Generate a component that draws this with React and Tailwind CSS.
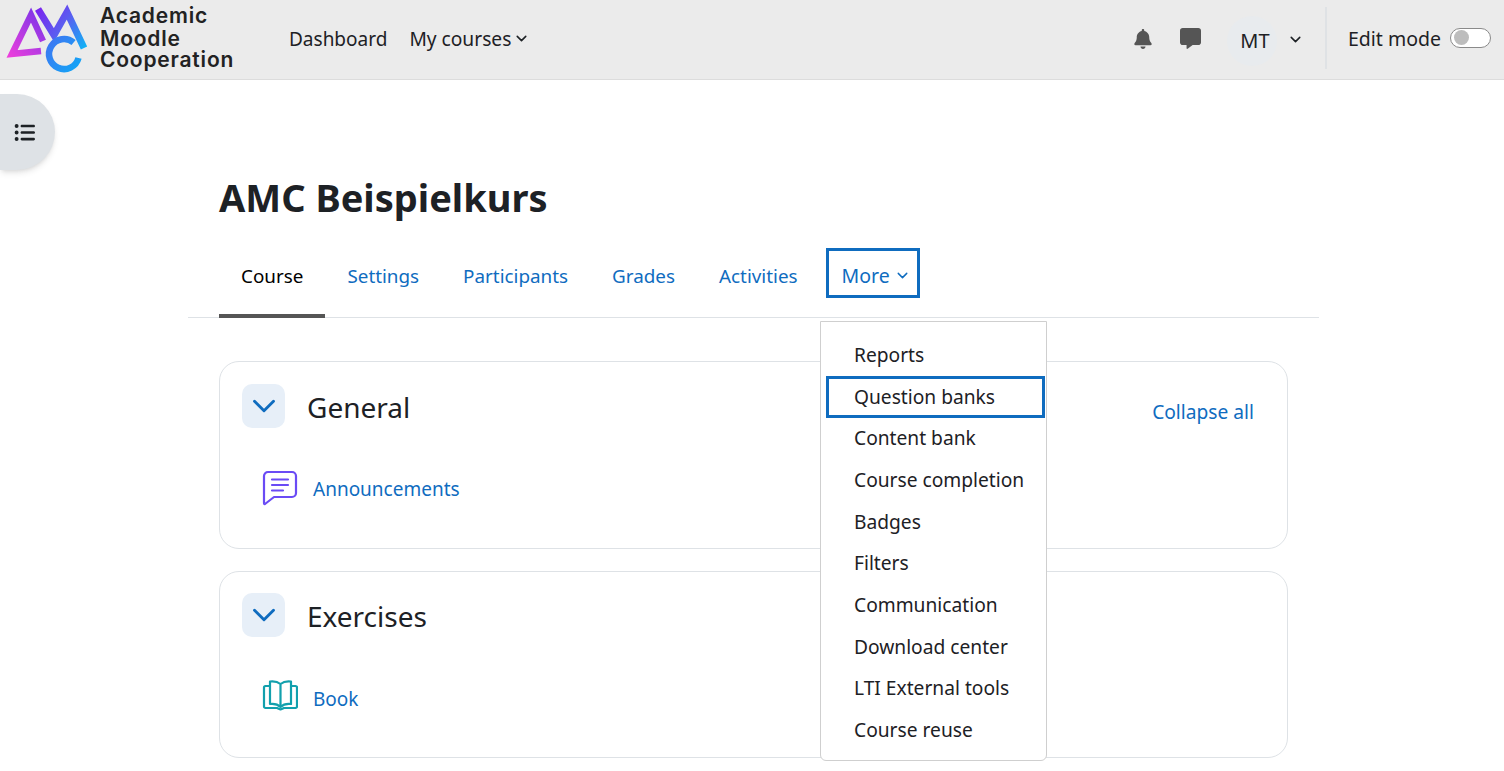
import React from "react";
import { FaBell, FaMessage, FaListUl } from "react-icons/fa6";
import { ChevronDown } from "lucide-react";

const tabs = ["Settings", "Participants", "Grades", "Activities"];
const menu = ["Reports", "Question banks", "Content bank", "Course completion", "Badges", "Filters", "Communication", "Download center", "LTI External tools", "Course reuse"];

function Logo() {
  return (
    <svg width="90" height="76" viewBox="0 0 90 76" className="shrink-0">
      <defs>
        <linearGradient id="a" x1="5" y1="55" x2="45" y2="15" gradientUnits="userSpaceOnUse">
          <stop offset="0" stopColor="#f03fdc" />
          <stop offset="1" stopColor="#7a35e8" />
        </linearGradient>
        <linearGradient id="m" x1="37" y1="8" x2="86" y2="45" gradientUnits="userSpaceOnUse">
          <stop offset="0" stopColor="#7c22ee" />
          <stop offset="0.5" stopColor="#5b5cf0" />
          <stop offset="1" stopColor="#12b0f5" />
        </linearGradient>
        <linearGradient id="c" x1="48" y1="40" x2="82" y2="68" gradientUnits="userSpaceOnUse">
          <stop offset="0" stopColor="#3f75f2" />
          <stop offset="1" stopColor="#10a8f6" />
        </linearGradient>
      </defs>
      <path d="M43 41 L31 15 L12 54 L41 51" fill="none" stroke="url(#a)" strokeWidth="6.5" />
      <path d="M38 9 L54 35 L67 12 L84 48" fill="none" stroke="url(#m)" strokeWidth="7" />
      <path d="M73.6 42.5 A15 15 0 1 0 78.5 58" fill="none" stroke="url(#c)" strokeWidth="6.5" />
    </svg>
  );
}

function CardHead({ title, extra }) {
  return (
    <div className="flex items-center">
      <div className="w-[43px] h-[44px] rounded-[10px] bg-[#e7eff8] flex items-center justify-center text-[#0f6cbf]">
        <ChevronDown size={38} strokeWidth={1.8} />
      </div>
      <h3 className="ml-[22px] h-[44px] text-[28px] leading-[47px] text-[#1d2125]">{title}</h3>
      {extra}
    </div>
  );
}

function AnnIcon() {
  return (
    <svg width="36" height="36" viewBox="0 0 36 36" fill="none" stroke="#6a4bf5" strokeWidth="2.2" strokeLinecap="round" strokeLinejoin="round">
      <path d="M6 2 H30 A4 4 0 0 1 34 6 V23 A4 4 0 0 1 30 27 H12 L3 34 Q2 34.5 2 33 V6 A4 4 0 0 1 6 2 Z" />
      <path d="M10 9.5 H26 M10 15 H26 M10 20.5 H21" />
    </svg>
  );
}

function BookIcon() {
  return (
    <svg width="36" height="36" viewBox="0 0 36 36" fill="none" stroke="#12a0ad" strokeWidth="2.2" strokeLinecap="round" strokeLinejoin="round">
      <path d="M18.5 4 C16 2 12 1 8 1.5 V24 C12 23.5 16 24.5 18.5 27 C21 24.5 25 23.5 29 24 V1.5 C25 1 21 2 18.5 4 Z M18.5 4 V27" />
      <path d="M8 6 H3.5 A1.5 1.5 0 0 0 2 7.5 V26.5 A1.5 1.5 0 0 0 3.5 28 H15 L18.5 29.5 L22 28 H33.5 A1.5 1.5 0 0 0 35 26.5 V7.5 A1.5 1.5 0 0 0 33.5 6 H29" />
    </svg>
  );
}

export default function App() {
  return (
    <div className="relative h-[771px] overflow-hidden bg-white text-[19px] text-[#1d2125] font-['Noto_Sans','Open_Sans',sans-serif]">
      <header className="h-[80px] bg-[#ebebeb] border-b border-[#dcdcdc] flex items-center">
        <div className="mt-[-4px] flex items-center w-[289px]">
          <Logo />
          <div className="ml-[10px] mt-[1px] font-['Inter',sans-serif] font-semibold text-[21px] tracking-[0.8px] leading-[21.5px] text-[#222]">
            <div className="mt-[-1px] mb-[2px]">Academic</div>
            <div>Moodle</div>
            <div className="mt-[-1px]">Cooperation</div>
          </div>
        </div>
        <a>Dashboard</a>
        <a className="ml-[22px] flex items-center text-[19.2px]">My courses<ChevronDown size={17} strokeWidth={2.2} className="ml-[2px] mt-[-2px]" /></a>
        <div className="ml-auto flex items-center h-full">
          <FaBell size={20} className="text-[#555] mt-[-2px]" />
          <FaMessage size={21} className="ml-[27px] text-[#555] mt-[-2px]" />
          <div className="ml-[26px] w-[50px] h-[50px] rounded-full bg-[#e8ebee] flex items-center justify-center mt-[2px] pl-[6px] text-[20px]">MT</div>
          <ChevronDown size={17} strokeWidth={2.2} className="ml-[10px]" />
          <div className="ml-[21px] w-[2px] h-[62px] bg-[#dfe2e5] mt-[-4px]" />
          <span className="ml-[21px] mt-[-1px] text-[19.5px]">Edit mode</span>
          <div className="ml-[9px] mr-[13px] mt-[-4px] w-[41px] h-[20px] rounded-full border border-[#8a8a8a] bg-white flex items-center pl-[3px]">
            <div className="w-[15px] h-[15px] rounded-full bg-[#bdbdbd]" />
          </div>
        </div>
      </header>

      <div className="absolute left-0 top-[94px] w-[55px] h-[76px] rounded-r-[38px] bg-[#dee2e6] shadow-md flex items-center justify-center pr-[6px]">
        <FaListUl size={21} className="text-[#1d2125]" />
      </div>

      <main className="ml-[188px] w-[1131px] pt-[94px]">
        <h1 className="ml-[31px] text-[38px] leading-[46px] font-bold text-[#1d2125]">AMC Beispielkurs</h1>
        <nav className="mt-[28px] h-[70px] border-b border-[#dee2e6] flex items-start pl-[31px] text-[#0f6cbf] text-[18.85px]">
          <div className="h-[70px] px-[22px] pb-[10px] flex items-center text-black border-b-4 border-[#555]">Course</div>
          {tabs.map((t) => (
            <div key={t} className="h-[70px] px-[22px] pb-[14px] flex items-center">{t}</div>
          ))}
          <div className="ml-[6px] w-[94px] h-[50px] pl-[13px] pt-[5px] flex items-center border-[3px] border-[#0f6cbf] text-[19.5px]">
            More<ChevronDown size={17} strokeWidth={2} className="ml-[4px]" />
          </div>
        </nav>
        <section className="mt-[43px] ml-[31px] w-[1069px] h-[188px] rounded-[20px] border border-[#dee2e6] px-[22px] pt-[22px]">
          <CardHead title="General" extra={<a className="ml-auto mr-[11px] mt-[12px] text-[19.2px] text-[#0f6cbf]">Collapse all</a>} />
          <div className="mt-[42px] ml-[20px] flex items-center">
            <AnnIcon />
            <a className="ml-[15px] mt-[3px] text-[#0f6cbf]">Announcements</a>
          </div>
        </section>
        <section className="mt-[22px] ml-[31px] w-[1069px] h-[187px] rounded-[20px] border border-[#dee2e6] px-[22px] pt-[21px]">
          <CardHead title="Exercises" />
          <div className="mt-[43px] ml-[20px] flex items-center">
            <BookIcon />
            <a className="ml-[15px] mt-[3px] text-[#0f6cbf]">Book</a>
          </div>
        </section>
      </main>

      <div className="absolute left-[820px] top-[321px] w-[227px] h-[440px] bg-white border border-[#cfcfcf] rounded-b-md pt-[12.6px] pl-[5px] pr-[1px] text-[19.2px]">
        {menu.map((m, i) => (
          <div key={m} className={"h-[41.67px] flex items-center pl-[28px] whitespace-nowrap " + (i === 1 ? "border-[3px] border-[#0f6cbf] !pl-[25px]" : "")}>{m}</div>
        ))}
      </div>
    </div>
  );
}
